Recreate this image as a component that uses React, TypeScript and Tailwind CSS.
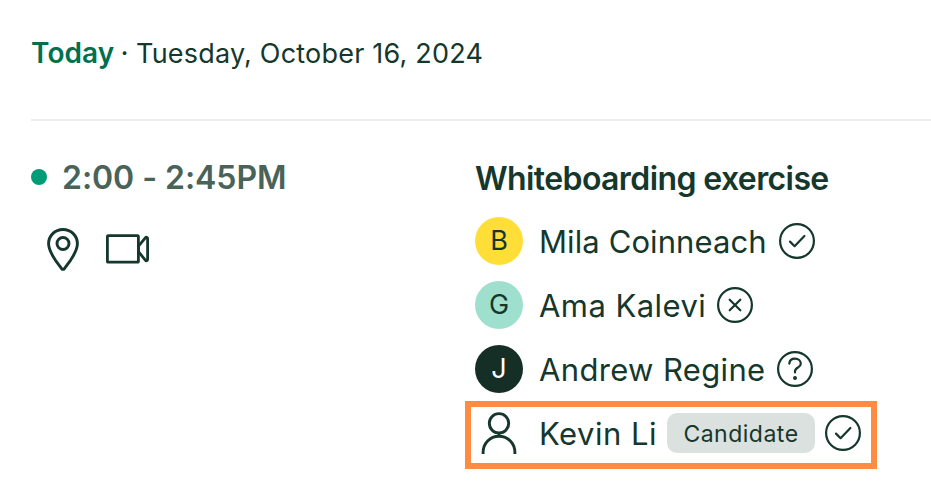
import type { ReactNode } from 'react';

type Status = 'accepted' | 'declined' | 'pending';

const interviewers: { name: string; initial: string; avatar: string; spacing: string; status: Status }[] = [
  { name: 'Mila Coinneach', initial: 'B', avatar: 'bg-[#ffde38] text-[#15372c]', spacing: 'w-[240px] tracking-[0.1px]', status: 'accepted' },
  { name: 'Ama Kalevi', initial: 'G', avatar: 'bg-[#9fdfce] text-[#15372c]', spacing: 'w-[178px] tracking-[0.45px]', status: 'declined' },
  { name: 'Andrew Regine', initial: 'J', avatar: 'bg-[#152f27] text-white', spacing: 'w-[238px] tracking-[0.35px]', status: 'pending' },
];

function StatusIcon({ status }: { status: Status }) {
  return (
    <svg className="w-9 h-9 shrink-0" viewBox="0 0 36 36" fill="none" stroke="#15372c" strokeWidth="2.2" strokeLinecap="round" strokeLinejoin="round">
      <circle cx="18" cy="18" r="16.900" />
      {status === 'accepted' && <path d="M11 18.6l4.600 4.600L25.400 13" />}
      {status === 'declined' && <path d="M12.700 12.700l10.600 10.600M23.300 12.700L12.700 23.300" />}
      {status === 'pending' && (
        <>
          <path d="M12.300 12.700c.3-3.200 2.500-5 5.700-5 3.300 0 5.800 2 5.800 5 0 4.200-5.800 3.400-5.800 7.800v1" />
          <circle cx="18" cy="27" r="2" fill="#15372c" stroke="none" />
        </>
      )}
    </svg>
  );
}

function Row({ children }: { children: ReactNode }) {
  return <div className="flex items-center h-12">{children}</div>;
}

export default function App() {
  return (
    <div className="w-[931px] h-[500px] overflow-hidden bg-white text-[#15372c] font-[Inter,sans-serif] whitespace-nowrap">
      <header className="ml-[31px] h-[121px] pt-[33px] border-b-2 border-[#ededed] flex items-start text-[28px] leading-10">
        <span className="w-[82px] font-semibold text-[#00704f] tracking-[0.1px]">Today</span>
        <span className="w-[23px] text-center">·</span>
        <span className="text-[27px] leading-[41px] tracking-[0.2px]">Tuesday, October 16, 2024</span>
      </header>

      <main className="flex pl-[31px] pt-9">
        <section className="w-[434px] shrink-0">
          <div className="flex items-center h-10">
            <span className="w-4 h-4 rounded-full bg-[#009b77]" />
            <span className="ml-[15px] text-[32px] font-semibold text-[#496359] leading-10 tracking-[-0.05px] pt-0.5">2:00 - 2:45PM</span>
          </div>
          <div className="flex items-start pl-4 pt-[31px]">
            <svg className="w-8 h-[43px]" viewBox="0 0 32 43" fill="none" stroke="#15372c" strokeWidth="2.900" strokeLinejoin="round">
              <path d="M16 1.500C7.900 1.500 1.600 7.700 1.600 15.800c0 5.700 3.200 11 6.900 16.500l6.300 8.500c.6.800 1.800.8 2.400 0l6.300-8.500c3.700-5.500 6.900-10.800 6.900-16.500C30.400 7.700 24.100 1.500 16 1.500z" />
              <circle cx="16" cy="15.500" r="6" />
            </svg>
            <svg className="w-[43px] h-[30px] ml-[27px] mt-1.5" viewBox="0 0 43 30" fill="none" stroke="#15372c" strokeWidth="2.800" strokeLinejoin="round">
              <rect x="1.400" y="1.600" width="31" height="26.600" rx=".8" />
              <path d="M32.500 12.200l7-8.500c.7-.8 2.100-.4 2.100.8v21c0 1.200-1.400 1.700-2.100.8l-7-8.600z" />
            </svg>
          </div>
        </section>

        <section>
          <h2 className="pl-2.5 h-11 leading-[44px] text-[32px] font-semibold tracking-[-0.6px]">Whiteboarding exercise</h2>
          <div className="pl-2.5 pt-4 flex flex-col gap-4">
            {interviewers.map((person) => (
              <Row key={person.name}>
                <div className={`w-12 h-12 rounded-full flex items-center justify-center pt-px text-[27px] ${person.avatar}`}>
                  {person.initial}
                </div>
                <span className={`ml-4 pt-0.5 text-[31px] ${person.spacing}`}>{person.name}</span>
                <StatusIcon status={person.status} />
              </Row>
            ))}
          </div>

          {/* Highlighted candidate */}
          <div className="mt-2 w-[412px] h-[68px] border-[6px] border-[#ff8c42] flex items-center pl-1 pb-1">
            <div className="w-12 h-12 flex items-center justify-center">
              <svg className="w-9 h-[42px]" viewBox="0 0 36 42" fill="none" stroke="#15372c" strokeWidth="2.900">
                <circle cx="18" cy="11.300" r="9.700" />
                <path d="M2.100 42v-1.500C2.100 31.400 8.800 24.200 18 24.200s15.900 7.200 15.900 16.300V42M18 21v3" />
              </svg>
            </div>
            <span className="ml-4 w-[128px] pt-0.5 text-[31px] tracking-[0.5px]">Kevin Li</span>
            <span className="w-[148px] h-10 mr-2.5 pt-0.5 rounded-[10px] bg-[#dbe1df] flex items-center justify-center text-[23px] tracking-[0.5px]">Candidate</span>
            <StatusIcon status="accepted" />
          </div>
        </section>
      </main>
    </div>
  );
}
